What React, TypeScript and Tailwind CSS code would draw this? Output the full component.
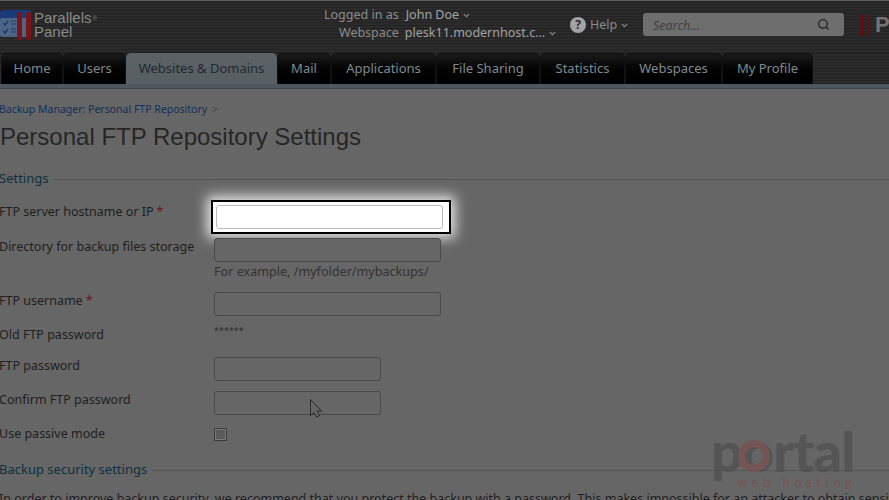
import React from 'react';
import { ChevronDown, Search } from 'lucide-react';

const tabs = ['Home', 'Users', 'Websites & Domains', 'Mail', 'Applications', 'File Sharing', 'Statistics', 'Webspaces', 'My Profile'];
const tabWidths = [62, 63, 151, 54, 105, 104, 85, 97, 91];

const Caret = () => <ChevronDown className="w-[9px] h-[9px] text-[#8f8f8f] ml-[3px] shrink-0" strokeWidth={3} />;

const Field = ({ w = 227 }: { w?: number }) => (
    <div className="h-[24px] rounded-[3px] border border-[#4a4a4a] bg-[#666666]" style={{ width: w }} />
);

const Section = ({ title }: { title: string }) => (
    <div className="flex items-center gap-[5px]">
        <span className="text-[13px] text-[#0f3040] whitespace-nowrap">{title}</span>
        <div className="flex-1 h-px bg-[#555555] mt-[1px]" />
    </div>
);

const Label = ({ text, req, className = '' }: { text: string; req?: boolean; className?: string }) => (
    <div className={`w-[215px] shrink-0 text-[12.5px] text-[#1f1f1f] whitespace-nowrap ${className}`}>
        {text}
        {req && <span className="text-[#6b1420] ml-[3px]">*</span>}
    </div>
);

export default function App() {
    return (
        <div className="relative w-[889px] h-[500px] overflow-hidden bg-[#666666] font-['Noto_Sans',sans-serif] text-[12.5px]">
            {/* header */}
            <div className="h-[53px] border-t border-[#5c5c5c] bg-[repeating-linear-gradient(0deg,#232323_0px,#232323_1px,#2b2b2b_1px,#2b2b2b_3px)] flex items-start">
                <div className="flex items-center w-[324px] pt-[9px] shrink-0">
                    <svg width="32" height="30" viewBox="0 0 32 30" className="shrink-0">
                        <rect x="0" y="0" width="31" height="27" rx="3" fill="#1c3a78" />
                        <rect x="0" y="8" width="28" height="19" rx="2" fill="#4f6584" />
                        <path d="M3 13l2 2 3-4M3 21l2 2 3-4" stroke="#1c3a78" strokeWidth="1.6" fill="none" />
                        <path d="M11 11h5M11 14h5M11 19h5M11 22h5" stroke="#1c3a78" strokeWidth="1.2" fill="none" />
                        <rect x="17" y="2" width="5" height="28" rx="2" fill="#7a141b" />
                        <rect x="26" y="2" width="5" height="28" rx="2" fill="#7a141b" />
                    </svg>
                    <div className="ml-[2px] font-['Liberation_Sans',sans-serif] text-[15px] leading-[14px] text-[#8a8a8a]">
                        <div>Parallels<sup className="text-[6px] ml-[1px]">®</sup></div>
                        <div>Panel</div>
                    </div>
                </div>
                <div className="w-[233px] shrink-0 pt-[5px] text-[12.5px] leading-[18px] text-[#8c8c8c]">
                    <div className="flex items-center whitespace-nowrap">
                        <span>Logged in as</span>
                        <span className="ml-[7px] text-[#a3a3a3]">John Doe</span>
                        <Caret />
                    </div>
                    <div className="flex items-center whitespace-nowrap pl-[15px]">
                        <span>Webspace</span>
                        <span className="ml-[6px] text-[#a3a3a3]">plesk11.modernhost.c...</span>
                        <Caret />
                    </div>
                </div>
                <div className="flex items-center pt-[15px] w-[73px] shrink-0 ml-[13px] text-[12.5px] text-[#8c8c8c]">
                    <div className="w-[16px] h-[16px] rounded-full bg-[#a3a3a3] text-[#2a2a2a] text-[12px] font-bold flex items-center justify-center mr-[4px]">?</div>
                    <span>Help</span>
                    <Caret />
                </div>
                <div className="mt-[12px] w-[201px] h-[23px] rounded-[3px] bg-[#6e6e6e] flex items-center justify-between pl-[10px] pr-[14px] shrink-0">
                    <span className="italic text-[12.5px] leading-[15px] mt-[2px] text-[#3f3f3f]">Search...</span>
                    <Search className="w-[13px] h-[13px] text-[#262626]" strokeWidth={2.5} />
                </div>
                <div className="flex items-center mt-[13px] ml-[16px] gap-[4px] shrink-0">
                    <div className="w-[3px] h-[21px] bg-[#5c1016]" />
                    <div className="w-[3px] h-[21px] bg-[#5c1016]" />
                    <span className="ml-[1px] font-['Liberation_Sans',sans-serif] font-bold text-[22px] leading-none text-[#727272]">P</span>
                </div>
            </div>
            {/* nav tabs */}
            <div className="h-[31px] pl-[1px] bg-[repeating-linear-gradient(0deg,#232323_0px,#232323_1px,#2b2b2b_1px,#2b2b2b_3px)] flex items-stretch">
                {tabs.map((t, i) => {
                    const active = t === 'Websites & Domains';
                    return (
                        <div
                            key={t}
                            style={{ width: tabWidths[i] }}
                            className={
                                active
                                    ? 'rounded-t-[5px] bg-gradient-to-b from-[#5c6164] to-[#565f63] text-[#22282f] text-[13px] flex items-center justify-center whitespace-nowrap shrink-0'
                                    : 'rounded-t-[5px] border-t border-x border-[#111111] bg-gradient-to-b from-[#1b1b1b] to-[#000000] text-[#7f8a90] text-[13px] flex items-center justify-center whitespace-nowrap shrink-0'
                            }
                        >
                            {t}
                        </div>
                    );
                })}
            </div>
            <div className="h-[5px] bg-[#4d575d] border-b border-[#40484d]" />
            {/* content */}
            <div className="pt-[14px] -ml-[1px]">
                <div className="flex items-center text-[10.5px] leading-[13px] text-[#12305c] whitespace-nowrap">
                    <span>Backup Manager: Personal FTP Repository</span>
                    <span className="ml-[5px] text-[#444444]">&gt;</span>
                </div>
                <h1 className="mt-[7px] ml-[1px] font-['Liberation_Sans',sans-serif] text-[24px] leading-[28px] text-[#262626]">Personal FTP Repository Settings</h1>
                <div className="mt-[18px]">
                    <Section title="Settings" />
                </div>
                <div className="mt-[11px] flex items-start h-[34px]">
                    <Label text="FTP server hostname or IP" req className="pt-[3px]" />
                    <div className="-ml-[3px] w-[240px] h-[34px] border-2 border-black bg-white shadow-[0_0_12px_4px_rgba(255,255,255,0.85)] pt-[3px] pl-[3px] shrink-0">
                        <div className="w-[227px] h-[24px] rounded-[3px] border border-[#bbbbbb] bg-white" />
                    </div>
                </div>
                <div className="mt-[4px] flex items-start">
                    <Label text="Directory for backup files storage" />
                    <div>
                        <Field />
                        <div className="mt-[3px] text-[12.6px] leading-[14px] text-[#333333]">For example, /myfolder/mybackups/</div>
                    </div>
                </div>
                <div className="mt-[13px] flex items-start">
                    <Label text="FTP username" req />
                    <Field />
                </div>
                <div className="mt-[10px] flex items-start">
                    <Label text="Old FTP password" />
                    <div className="text-[9px] leading-[10px] text-[#2c2c2c]">******</div>
                </div>
                <div className="mt-[13px] flex items-start">
                    <Label text="FTP password" />
                    <Field w={167} />
                </div>
                <div className="mt-[10px] flex items-start">
                    <Label text="Confirm FTP password" />
                    <Field w={167} />
                </div>
                <div className="mt-[10px] flex items-start">
                    <Label text="Use passive mode" />
                    <div className="mt-[3px] w-[13px] h-[13px] border border-[#3c3c3c] bg-[#5a5a5a] shadow-[inset_0_0_0_1px_#777777]" />
                </div>
                <div className="mt-[16px]">
                    <Section title="Backup security settings" />
                </div>
                <div className="mt-[12px] text-[12.5px] leading-[14px] text-[#1f1f1f] whitespace-nowrap">
                    In order to improve backup security, we recommend that you protect the backup with a password. This makes impossible for an attacker to obtain sensitive data.
                </div>
            </div>
            {/* mouse cursor */}
            <svg width="16" height="22" viewBox="0 0 16 22" className="absolute left-[309px] top-[398px]">
                <path d="M1.500 1.500v16l3.500-3 2.500 4.500 3-1.500-2.500-4.500h4.500z" fill="#666666" stroke="#2a2a2a" strokeWidth="1" />
            </svg>
            {/* watermark */}
            <div className="absolute left-[711px] top-[428px] w-[150px] h-[62px] opacity-60">
                <div className="font-['Lato',sans-serif] font-black text-[56px] leading-[46px] tracking-[-1px] text-[#4a4a4a]">portal</div>
                <div className="absolute left-[27px] top-[12px] w-[32px] h-[32px] rounded-full border-[7px] border-[#7d4a4a]" />
                <div className="absolute left-[26px] top-[47px] font-['Lato',sans-serif] text-[13px] leading-[14px] tracking-[4.5px] text-[#7f4747] whitespace-nowrap">web hosting</div>
            </div>
        </div>
    );
}
